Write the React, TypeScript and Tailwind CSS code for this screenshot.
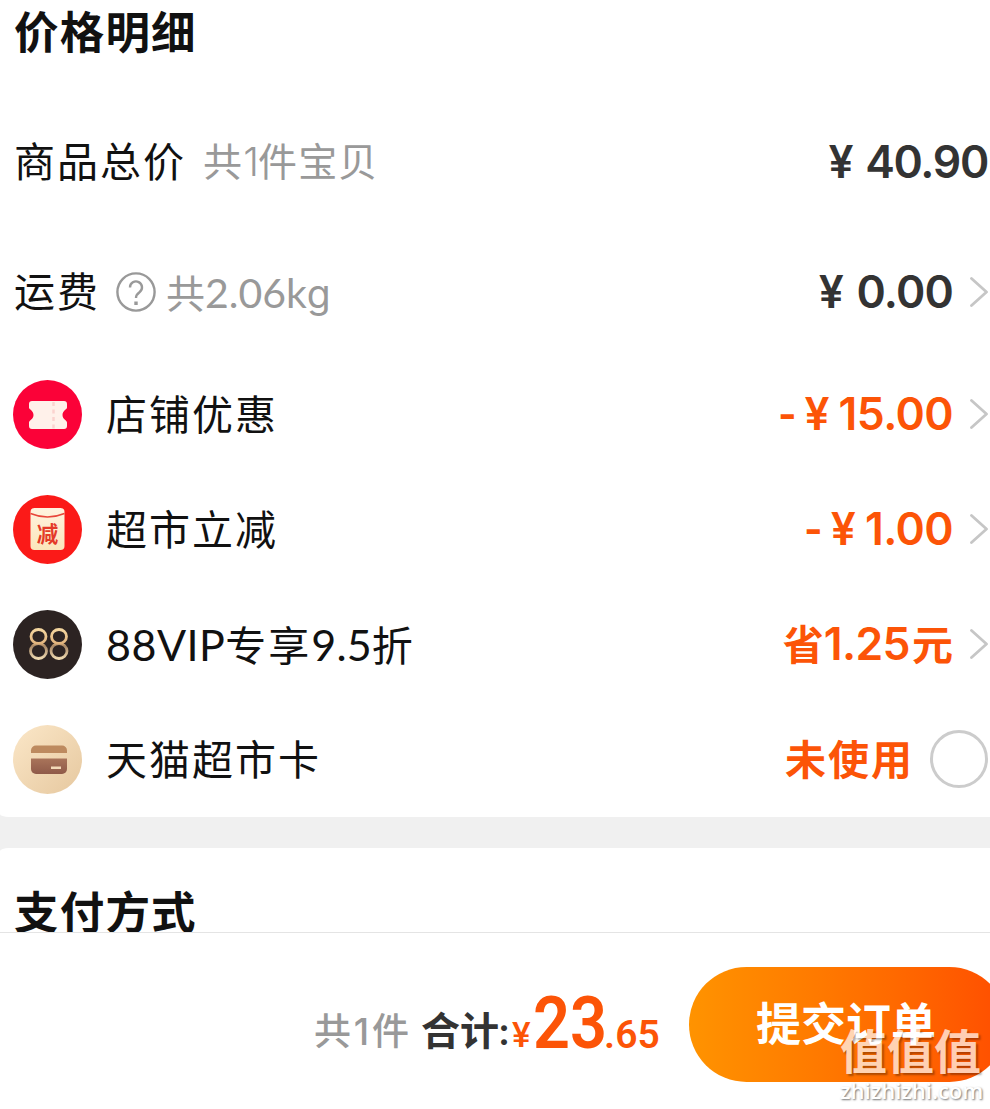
import type { ReactNode } from "react";

const COUPON = (
  <svg viewBox="0 0 69 69" className="size-[69px]">
    <circle cx="34.5" cy="34.5" r="34.5" fill="#fb0238" />
    <path
      d="M19 21h32a3 3 0 0 1 3 3v3.500c0 2-4.500 3-4.500 7.500s4.500 5 4.500 7.500V46a3 3 0 0 1-3 3H19a3 3 0 0 1-3-3v-3.500c0-2.500 4.500-3 4.500-7.500s-4.500-5.500-4.500-7.500V24a3 3 0 0 1 3-3z"
      fill="#fff1ea"
    />
    <path d="M40.500 22v27" stroke="#fbd3cf" strokeWidth="2.500" strokeDasharray="4 3.500" />
  </svg>
);

const DISCOUNT = (
  <svg viewBox="0 0 69 69" className="size-[69px]">
    <defs>
      <linearGradient id="pack" x1="0" y1="0" x2="0" y2="1">
        <stop offset="0" stopColor="#fff3df" />
        <stop offset="1" stopColor="#fbe6bb" />
      </linearGradient>
    </defs>
    <circle cx="34.5" cy="34.5" r="34.5" fill="#fb1a18" />
    <rect x="17.500" y="13" width="34" height="42" rx="4" fill="url(#pack)" />
    <path d="M17.500 18.500q17 7 34 0" fill="none" stroke="#e8463a" strokeWidth="1.600" />
    <text x="34.500" y="46.500" textAnchor="middle" fontSize="21.500" fontWeight="700" fill="#e43a28" fontFamily="Noto Sans CJK SC, sans-serif">
      减
    </text>
  </svg>
);

const VIP = (
  <svg viewBox="0 0 69 69" className="size-[69px]">
    <defs>
      <linearGradient id="gold" gradientUnits="userSpaceOnUse" x1="0" y1="18" x2="0" y2="50">
        <stop offset="0" stopColor="#f6d9a2" />
        <stop offset="0.48" stopColor="#e3b57e" />
        <stop offset="0.56" stopColor="#a58463" />
        <stop offset="1" stopColor="#f6e2b8" />
      </linearGradient>
    </defs>
    <circle cx="34.5" cy="34.5" r="34.5" fill="#2c2322" />
    <g fill="none" stroke="url(#gold)" strokeWidth="2.800">
      <ellipse cx="25.500" cy="26.500" rx="7.500" ry="7" />
      <ellipse cx="25.500" cy="41" rx="8" ry="7.500" />
      <ellipse cx="46" cy="26.500" rx="7.500" ry="7" />
      <ellipse cx="46" cy="41" rx="8" ry="7.500" />
    </g>
  </svg>
);

const CARD = (
  <svg viewBox="0 0 69 69" className="size-[69px]">
    <defs>
      <linearGradient id="cream" x1="0" y1="0" x2="1" y2="1">
        <stop offset="0" stopColor="#fbe7c8" />
        <stop offset="1" stopColor="#e6c89f" />
      </linearGradient>
      <linearGradient id="brown" x1="0" y1="0" x2="0" y2="1">
        <stop offset="0" stopColor="#a9745a" />
        <stop offset="1" stopColor="#8f5a49" />
      </linearGradient>
    </defs>
    <circle cx="34.5" cy="34.5" r="34.5" fill="url(#cream)" />
    <path d="M18 28v-2.500a5 5 0 0 1 5-5h26a5 5 0 0 1 5 5V28z" fill="#bd8a5f" />
    <path d="M18 33.500h36V44a5 5 0 0 1-5 5H23a5 5 0 0 1-5-5z" fill="url(#brown)" />
    <rect x="38" y="41.500" width="10" height="2.500" fill="#f3d9b8" />
  </svg>
);

const ORANGE = "text-[#fc5407]";
const AMOUNT = "font-[Inter] text-[44.5px] font-semibold [word-spacing:3px]";

function Arrow() {
  return (
    <svg viewBox="0 0 18 30" className="ml-[17px] h-[30px] w-[18px] shrink-0" fill="none" stroke="#c6c6c6" strokeWidth="2.8">
      <path d="M1.500 1.500 16.500 15 1.500 28.500" strokeLinecap="round" strokeLinejoin="round" />
    </svg>
  );
}

type RowProps = { icon: ReactNode; label: ReactNode; children: ReactNode };

function DiscountRow({ icon, label, children }: RowProps) {
  return (
    <li className="flex h-[115px] items-center pr-[2px] pl-[13px]">
      {icon}
      <span className="-mt-px ml-[24px] text-[41px] tracking-[2px] text-[#111]">{label}</span>
      <span className={`-mt-px ml-auto flex items-center ${ORANGE}`}>{children}</span>
    </li>
  );
}

function Minus({ children }: { children: string }) {
  return (
    <>
      <span className={`origin-right scale-x-90 ${AMOUNT}`}>-</span>
      <span className={`ml-[8px] ${AMOUNT}`}>¥</span>
      <span className={`ml-[9px] tracking-[-0.6px] ${AMOUNT}`}>{children}</span>
    </>
  );
}

export default function App() {
  return (
    <main className="relative h-[1109px] w-[990px] overflow-hidden bg-[#f0f0f0] font-['Lato','Noto_Sans_CJK_SC',sans-serif] leading-none whitespace-nowrap">
      <section className="h-[817px] rounded-bl-[9px_3px] bg-white">
        <h2 className="flex h-[97px] items-start pt-[10px] pl-[14px] text-[44.5px] font-bold tracking-[1.2px] text-[#111]">价格明细</h2>

        <div className="flex h-[130px] items-center pr-[2px] pl-[14px]">
          <span className="-mt-px text-[41px] tracking-[2px] text-[#111]">商品总价</span>
          <span className="ml-[17px] text-[39px] tracking-[1.2px] text-[#999]">
            共<span className="font-[Inter] text-[40px] font-light tracking-[-1px]">1</span>件宝贝
          </span>
          <span className={`mt-px ml-auto tracking-[-1.3px] text-[#333] ${AMOUNT}`}>¥ 40.90</span>
        </div>

        <div className="flex h-[130px] items-center pr-[2px] pl-[14px]">
          <span className="-mt-px text-[41px] tracking-[2px] text-[#111]">运费</span>
          <svg viewBox="0 0 40 40" className="ml-[16px] size-[40px]" fill="none" stroke="#999" strokeWidth="2.4">
            <circle cx="20" cy="20" r="18.600" />
            <path d="M14 15.500a6 6 0 1 1 9.500 4.800c-2.200 1.600-3.500 2.700-3.500 5.700" />
            <path d="M20 29.500v3.500" strokeWidth="3.400" />
          </svg>
          <span className="ml-[10px] text-[39px] text-[#999]">
            共<span className="text-[41px]">2.06k</span>
            <span className="font-[Inter]">g</span>
          </span>
          <span className={`mt-px ml-auto tracking-[-0.8px] text-[#333] ${AMOUNT}`}>¥ 0.00</span>
          <Arrow />
        </div>

        <ul>
          <DiscountRow icon={COUPON} label="店铺优惠">
            <Minus>15.00</Minus>
            <Arrow />
          </DiscountRow>
          <DiscountRow icon={DISCOUNT} label="超市立减">
            <Minus>1.00</Minus>
            <Arrow />
          </DiscountRow>
          <DiscountRow
            icon={VIP}
            label={
              <>
                <span className="text-[43px] tracking-[0.5px]">88VIP</span>专享<span className="text-[43px] tracking-[0.1px]">9.5</span>折
              </>
            }
          >
            <span className="text-[41px] font-bold">省</span>
            <span className={`tracking-[-0.6px] ${AMOUNT}`}>1.25</span>
            <span className="ml-[2px] text-[41px] font-bold">元</span>
            <Arrow />
          </DiscountRow>
          <DiscountRow icon={CARD} label="天猫超市卡">
            <span className="text-[41px] font-bold tracking-[2px]">未使用</span>
            <span className="ml-[16px] size-[58px] rounded-full border-[3px] border-[#ccc]" />
          </DiscountRow>
        </ul>
      </section>

      <section className="mt-[31px] h-[84px] overflow-hidden rounded-tl-[9px_3px] bg-white">
        <h2 className="pt-[42px] pl-[14px] text-[44.5px] font-bold tracking-[1.2px] text-[#111]">支付方式</h2>
      </section>

      <footer className="flex h-[177px] items-start border-t border-[#e4e4e4] bg-white pt-[34px]">
        <div className="ml-[314px] flex h-[115px] w-[375px] shrink-0 items-baseline pt-[21px]">
          <span className="-translate-y-[3px] text-[37px] font-medium text-[#999]">
            共<span className="inline-block w-[21px] text-center font-[Inter]">1</span>件
          </span>
          <span className="ml-[12px] -translate-y-[3px] text-[39px] font-bold text-[#333]">合计:</span>
          <span className={`ml-[3px] w-[21px] -translate-y-px font-[Roboto] text-[35px] font-medium ${ORANGE}`}>¥</span>
          <span className={`w-[71px] origin-left scale-x-90 font-[Roboto] text-[72px] font-semibold ${ORANGE}`}>23</span>
          <span className={`font-[Roboto] text-[39px] font-semibold ${ORANGE}`}>.65</span>
        </div>
        <button className="flex h-[115px] w-[318px] shrink-0 items-center rounded-full bg-linear-to-r from-[#ff9300] to-[#ff4d00] pl-[67px] text-[45px] font-bold text-white">
          提交订单
        </button>
      </footer>

      <div className="absolute top-[1028px] left-[840px]">
        <p className="text-[47px] font-bold text-white opacity-70 [text-shadow:2px_2px_2px_rgba(0,0,0,0.45)]">值值值</p>
        <p className="mt-[4px] font-['Open_Sans'] text-[22px] font-semibold text-white [text-shadow:1px_1px_2px_rgba(0,0,0,0.55)]">zhizhizhi.com</p>
      </div>
    </main>
  );
}
